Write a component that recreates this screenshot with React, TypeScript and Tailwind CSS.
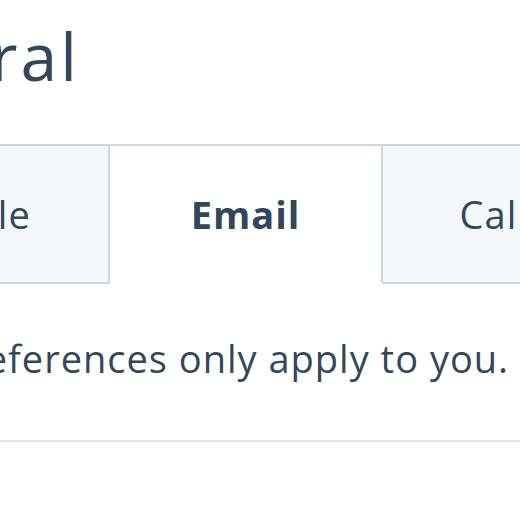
export default function App() {
  const tabs = [
    { label: "Profile", active: false, w: "w-[280px]" },
    { label: "Email", active: true, w: "w-[273px]" },
    { label: "Calling", active: false, w: "w-[280px]" },
  ];

  return (
    <div className="w-[520px] h-[520px] overflow-hidden bg-white text-[#33475b] font-['Open_Sans',sans-serif]">
      <div className="-ml-[170px] w-[1000px] pt-[15px]">
        <h1 className="-ml-[14px] text-[66px] leading-[80px] font-normal tracking-[3px]">General</h1>

        <div className="mt-[49px] flex">
          {tabs.map((t, i) => (
            <div
              key={t.label}
              className={`${t.w} h-[140px] flex items-center justify-center border-t-2 border-r-2 border-[#cbd6e2] text-[38px] tracking-[1px] ${
                i === 0 ? "border-l-2" : ""
              } ${t.active ? "bg-white font-bold border-b-2 border-b-white" : "bg-[#f5f8fa] border-b-2"}`}
            >
              {t.label}
            </div>
          ))}
        </div>

        <p className="-ml-[6px] mt-[50px] text-[38px] leading-[48px] tracking-[1px]">These preferences only apply to you.</p>

        <div className="mt-[58px] h-[2px] bg-[#dfe3eb]" />
      </div>
    </div>
  );
}
